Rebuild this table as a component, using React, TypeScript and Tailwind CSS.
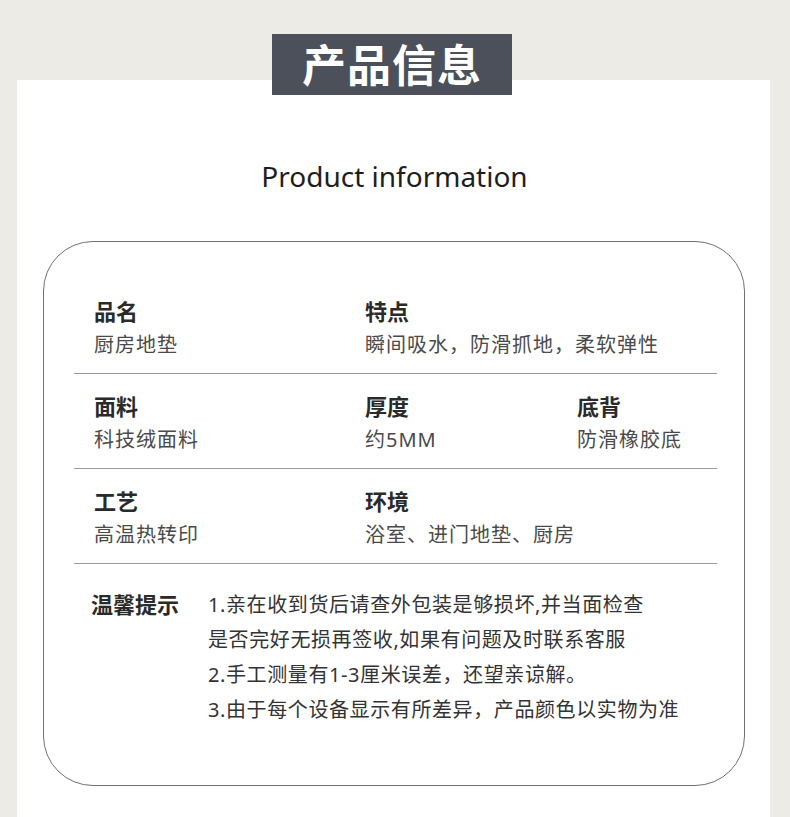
const FONT = "font-['Noto_Sans','Noto_Sans_CJK_SC',sans-serif]"

const rows = [
  [
    { label: "品名", value: "厨房地垫" },
    { label: "特点", value: "瞬间吸水，防滑抓地，柔软弹性" },
  ],
  [
    { label: "面料", value: "科技绒面料" },
    { label: "厚度", value: "约5MM" },
    { label: "底背", value: "防滑橡胶底" },
  ],
  [
    { label: "工艺", value: "高温热转印" },
    { label: "环境", value: "浴室、进门地垫、厨房" },
  ],
]

const notes = [
  "1.亲在收到货后请查外包装是够损坏,并当面检查",
  "是否完好无损再签收,如果有问题及时联系客服",
  "2.手工测量有1-3厘米误差，还望亲谅解。",
  "3.由于每个设备显示有所差异，产品颜色以实物为准",
]

export default function App() {
  return (
    <div className={`min-h-[817px] w-[790px] bg-[#edebe6] ${FONT} flex flex-col`}>
      {/* white panel with title tab overlapping its top edge */}
      <div className="relative mt-[80px] ml-[17px] mr-[20px] flex-1 bg-white pb-[32px]">
        <div className="absolute left-[255px] -top-[46px] w-[240px] h-[61px] bg-[#4b505a] flex items-center justify-center">
          <span className="text-white text-[44px] font-bold leading-none tracking-[1px]">产品信息</span>
        </div>

        <h2 className="pt-[76px] pl-[2px] text-center text-[28px] leading-[40px] text-[#1e1e1e]">Product information</h2>

        {/* info card */}
        <div className="mt-[45px] ml-[26px] mr-[25px] h-[545px] rounded-[50px] border-[1.5px] border-[#707070] pl-[30px] pr-[27px] pt-[37px]">
          {rows.map((row, i) => (
            <div key={i} className="grid grid-cols-[271px_212px_1fr] pl-[20px] pt-[18px] pb-[15px] border-b border-[#9a9a9a]">
              {row.map((c) => (
                <div key={c.label} className="whitespace-nowrap">
                  <p className="text-[22px] font-bold leading-[28px] text-[#2a2a2a]">{c.label}</p>
                  <p className="mt-[7px] text-[20px] leading-[26px] tracking-[1px] text-[#4a4a4a]">{c.value}</p>
                </div>
              ))}
            </div>
          ))}

          <div className="flex pt-[23px] pl-[17px]">
            <p className="w-[117px] shrink-0 text-[22px] font-bold leading-[35px] text-[#2a2a2a]">温馨提示</p>
            <div className="text-[20px] leading-[35px] tracking-[0.6px] text-[#333] whitespace-nowrap">
              {notes.map((n) => (
                <p key={n}>{n}</p>
              ))}
            </div>
          </div>
        </div>
      </div>
    </div>
  )
}
